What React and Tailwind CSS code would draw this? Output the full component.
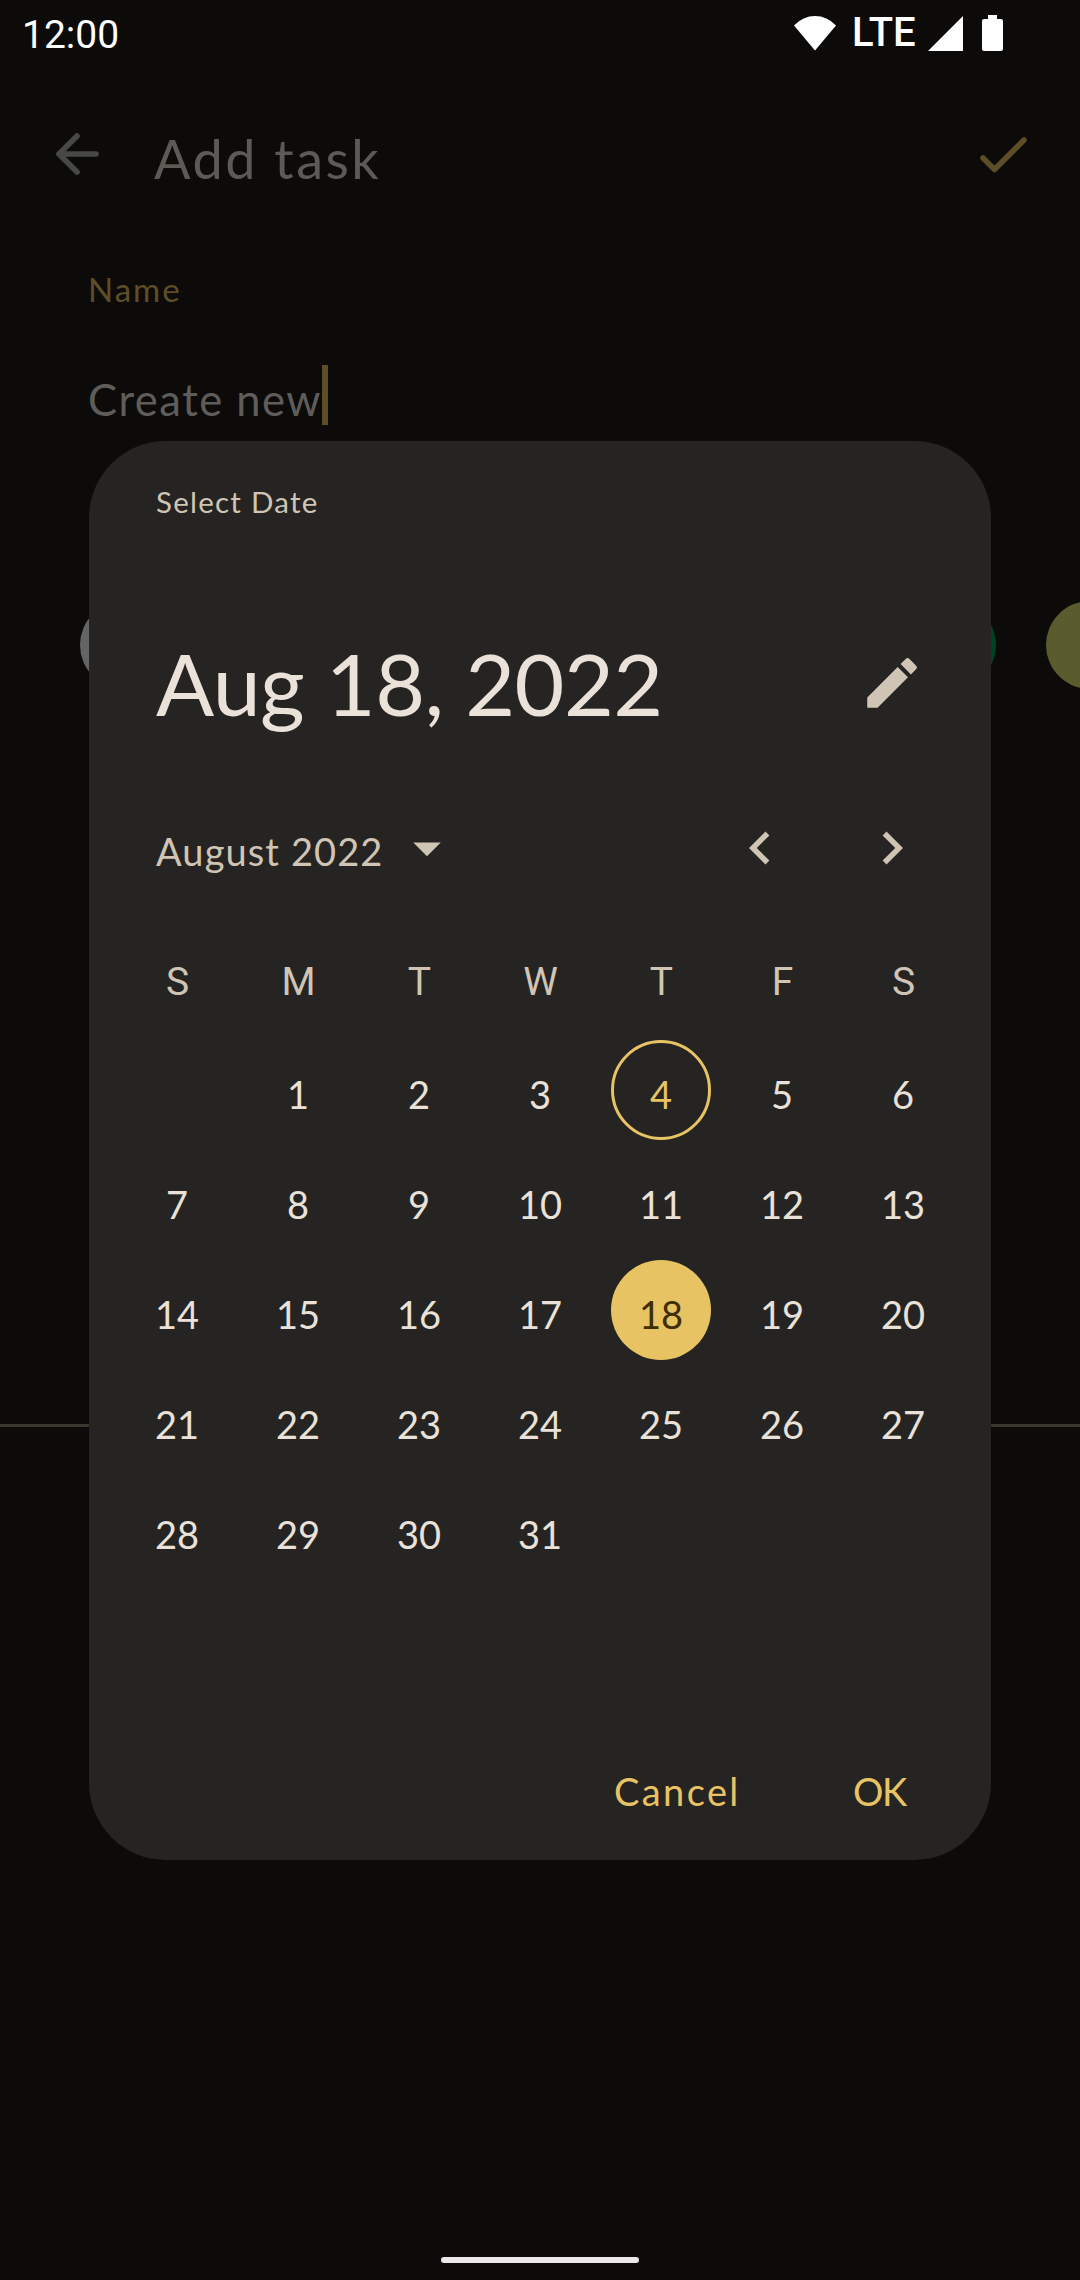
import React from "react";

const weekdays = ["S", "M", "T", "W", "T", "F", "S"];
const days = Array.from({ length: 31 }, (_, i) => i + 1);
const swatches = [
  "bg-[#646464]",
  "bg-[#5c2b2b]",
  "bg-[#5c3d2b]",
  "bg-[#2b3d5c]",
  "bg-[#2b5c5c]",
  "bg-[#4a2b5c]",
  "bg-[#004324]",
  "bg-[#5b5c2e]",
];

function StatusBar() {
  return (
    <header className="flex h-[66px] shrink-0 items-center pl-[22px] pr-[77px] text-white font-[Roboto,sans-serif]">
      <span className="pt-[3px] text-[39px] leading-[66px]">12:00</span>
      <svg className="ml-auto mt-[-1px]" width="42" height="36" viewBox="0 0 42 36" fill="currentColor">
        <path d="M0 10.5Q9 1 21 1t21 9.500L21 35.500z" />
      </svg>
      <span className="ml-[16px] w-[65px] text-[40px] font-medium leading-[66px]">LTE</span>
      <svg className="ml-[11px]" width="35" height="35" viewBox="0 0 35 35" fill="currentColor">
        <path d="M35 0v35H0z" />
      </svg>
      <svg className="ml-[19px]" width="21" height="36" viewBox="0 0 21 36" fill="currentColor">
        <path d="M6 0h9v4h4a2 2 0 0 1 2 2v28a2 2 0 0 1-2 2H2a2 2 0 0 1-2-2V6a2 2 0 0 1 2-2h4z" />
      </svg>
    </header>
  );
}

function TaskForm() {
  return (
    <>
      <div className="flex h-[176px] shrink-0 items-center pl-[56px] pr-[53px]">
        <svg className="text-[#484846]" width="43" height="42" viewBox="0 0 43 42" fill="none" stroke="currentColor" strokeWidth="5.6" strokeLinecap="round" strokeLinejoin="round">
          <path d="M40 21H3M21 3L3 21l18 18" />
        </svg>
        <h1 className="ml-[55px] pt-[10px] text-[54px] leading-[66px] tracking-[2.5px] text-[#5d5955]">Add task</h1>
        <svg className="ml-auto mt-[2px] text-[#5d4e28]" width="47" height="36" viewBox="0 0 47 36" fill="none" stroke="currentColor" strokeWidth="5.500" strokeLinecap="round" strokeLinejoin="round">
          <path d="M3 21l11.500 11.500L44 3" />
        </svg>
      </div>
      <label className="mt-[27px] pl-[88px] text-[33px] leading-[40px] tracking-[2px] text-[#5d4e28]">Name</label>
      <div className="mt-[56px] flex h-[60px] shrink-0 pl-[88px]">
        <span className="w-[234px] whitespace-nowrap pt-[4px] text-[43.500px] leading-[60px] tracking-[1.5px] text-[#5f5d5a]">Create new</span>
        <span className="h-[60px] w-[6px] bg-[#5d4e28]" />
      </div>
      <div className="mt-[176px] flex shrink-0 gap-[50px] overflow-hidden pl-[80px]">
        {swatches.map((color) => (
          <span key={color} className={"size-[88px] shrink-0 rounded-full " + color} />
        ))}
      </div>
      <div className="mt-[735px] h-[3px] shrink-0 bg-[#38372d]" />
      <div className="mx-auto mt-auto mb-[17px] h-[6px] w-[198px] shrink-0 rounded-full bg-[#ebe8eb]" />
    </>
  );
}

function Day({ day }) {
  let look = "text-[#eae1d9]";
  if (day === 4) look = "rounded-full border-3 border-[#e8c364] text-[#e8c364]";
  if (day === 18) look = "rounded-full bg-[#e8c364] text-[#3e2e00]";
  return (
    <button className={"flex size-[100px] items-center justify-center text-[38px] leading-[60px] " + look}>
      <span className="pt-[7px]">{day}</span>
    </button>
  );
}

function DatePicker() {
  return (
    <section className="absolute left-[89px] top-[441px] flex h-[1419px] w-[902px] flex-col rounded-[77px] bg-[#252422] pt-[40px] text-[#d0c5b4]">
      <p className="pl-[67px] pt-px text-[29.5px] leading-[40px] tracking-[1.25px]">Select Date</p>
      <div className="mt-[111px] flex h-[100px] items-center justify-between pl-[67px] pr-[66px]">
        <h2 className="text-[86px] leading-[100px] tracking-[-0.5px] text-[#eae1d9]">Aug 18, 2022</h2>
        <svg width="66" height="66" viewBox="0 0 24 24" fill="currentColor">
          <path d="M3 17.250V21h3.750L17.810 9.940l-3.750-3.750L3 17.250zM20.710 7.040a.996.996 0 0 0 0-1.410l-2.340-2.340a.996.996 0 0 0-1.410 0l-1.830 1.830 3.750 3.750 1.830-1.830z" />
        </svg>
      </div>
      <div className="mt-[82px] flex h-[66px] items-center pl-[67px] pr-[66px]">
        <span className="w-[238px] whitespace-nowrap pt-[6px] text-[38px] leading-[60px] tracking-[1.1px]">August 2022</span>
        <svg width="66" height="66" viewBox="0 0 24 24" fill="currentColor">
          <path d="M7 10l5 5 5-5z" />
        </svg>
        <svg className="ml-auto" width="66" height="66" viewBox="0 0 24 24" fill="currentColor">
          <path d="M15.410 16.590L10.830 12l4.580-4.590L14 6l-6 6 6 6z" />
        </svg>
        <svg className="ml-[66px]" width="66" height="66" viewBox="0 0 24 24" fill="currentColor">
          <path d="M8.590 16.590L13.170 12 8.590 7.410 10 6l6 6-6 6z" />
        </svg>
      </div>
      <div className="mx-auto mt-[44px] grid w-[847px] grid-cols-7 font-[Roboto,sans-serif]">
        {weekdays.map((name, i) => (
          <span key={i} className="pt-[5px] pl-px text-center text-[39px] leading-[105px]">{name}</span>
        ))}
      </div>
      <div className="mx-auto grid w-[847px] auto-rows-[110px] grid-cols-7 place-items-center">
        <span />
        {days.map((day) => (
          <Day key={day} day={day} />
        ))}
      </div>
      <div className="mt-[176px] flex justify-end pr-[82px] text-[38px] leading-[60px] text-[#e8c364]">
        <button className="w-[239px] text-left tracking-[2.400px]">Cancel</button>
        <button className="w-[56px] text-left tracking-[-1.5px]">OK</button>
      </div>
    </section>
  );
}

export default function App() {
  return (
    <main className="relative flex h-[2280px] w-[1080px] flex-col overflow-hidden bg-[#0c0b09] font-[Lato,sans-serif]">
      <StatusBar />
      <TaskForm />
      <DatePicker />
    </main>
  );
}
